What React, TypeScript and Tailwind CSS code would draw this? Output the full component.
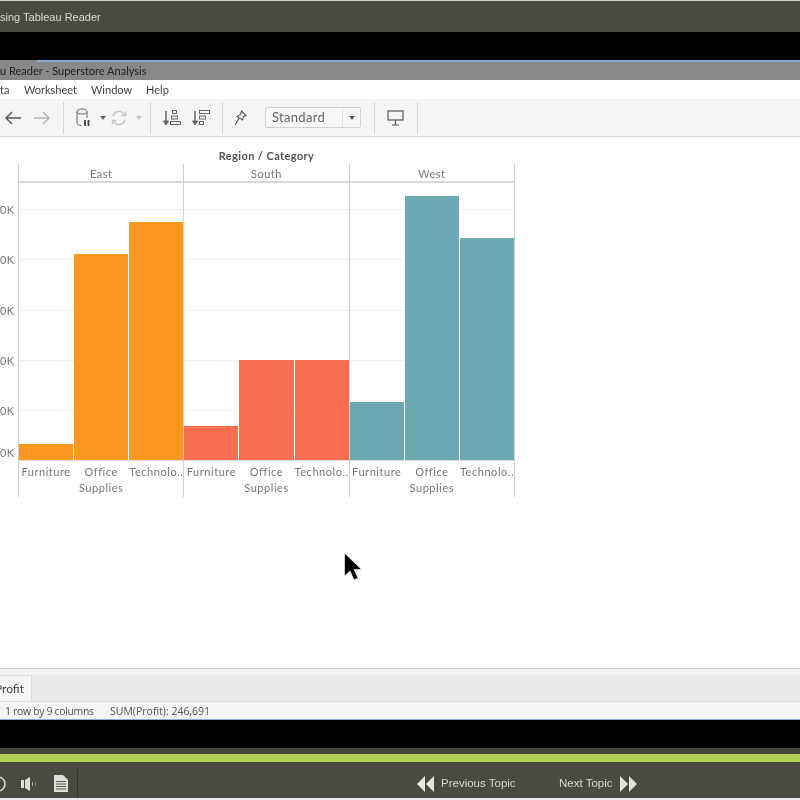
const panes = [
  { name: "East", color: "bg-[#fd9720]", tops: [444, 254, 222] },
  { name: "South", color: "bg-[#f96f52]", tops: [426, 360, 360] },
  { name: "West", color: "bg-[#6ca9b3]", tops: [402, 196, 238] },
];
const gridY = [209, 259, 310, 360, 410];
const axisY = [209, 259, 310, 360, 410, 452];
const font = "font-['Lato','Open_Sans',sans-serif]";

function Sep({ ml }: { ml: string }) {
  return <div className={`h-[32px] w-px bg-[#d8d8d8] shrink-0 ${ml}`} />;
}

function Caret({ ml, color }: { ml: string; color: string }) {
  return (
    <svg width="6" height="4" viewBox="0 0 6 4" className={`shrink-0 ${ml}`}>
      <path d="M0 0h6L3 4z" fill={color} />
    </svg>
  );
}

function Toolbar() {
  return (
    <div className="h-[37px] bg-[#f5f5f5] border-b border-[#d4d4d4] flex items-center shrink-0 box-content">
      <svg width="16" height="14" viewBox="0 0 16 14" className="ml-[5px] shrink-0" fill="none" stroke="#555" strokeWidth="1.5">
        <path d="M16 7H1M7 1 1 7l6 6" />
      </svg>
      <svg width="16" height="14" viewBox="0 0 16 14" className="ml-[13px] shrink-0" fill="none" stroke="#b5b5b5" strokeWidth="1.5">
        <path d="M0 7h15M9 1l6 6-6 6" />
      </svg>
      <Sep ml="ml-[13px]" />
      <svg width="15" height="19" viewBox="0 0 15 19" className="ml-[12px] shrink-0" fill="none" stroke="#666" strokeWidth="1">
        <ellipse cx="6" cy="3.5" rx="5" ry="2.5" />
        <path d="M1 3.5V15c0 1.5 2 2.500 4.500 2.500M11 3.500V10" />
        <path d="M9 12v6M12.500 12v6" strokeWidth="1.800" stroke="#444" />
      </svg>
      <Caret ml="ml-[9px]" color="#666" />
      <svg width="16" height="16" viewBox="0 0 16 16" className="ml-[5px] shrink-0" fill="none" stroke="#c4c4c4" strokeWidth="1.300">
        <path d="M2 6a6.200 6.200 0 0 1 11-2l1 1.500M14 10a6.200 6.200 0 0 1-11 2l-1-1.500" />
        <path d="M14.500 1.500v4h-4M1.500 14.500v-4h4" />
      </svg>
      <Caret ml="ml-[9px]" color="#c4c4c4" />
      <Sep ml="ml-[8px]" />
      <svg width="18" height="16" viewBox="0 0 18 16" className="ml-[12px] shrink-0" fill="none" stroke="#666" strokeWidth="1">
        <path d="M3 1v12" strokeWidth="1.500" />
        <path d="M.5 11 3 15l2.500-4z" fill="#666" />
        <rect x="9.500" y=".5" width="4" height="3" />
        <rect x="8.500" y="6" width="6" height="3" />
        <rect x="7.500" y="11.500" width="10" height="3" />
      </svg>
      <svg width="18" height="16" viewBox="0 0 18 16" className="ml-[11px] shrink-0" fill="none" stroke="#666" strokeWidth="1">
        <path d="M3 1v12" strokeWidth="1.500" />
        <path d="M.5 11 3 15l2.500-4z" fill="#666" />
        <rect x="7.500" y=".5" width="10" height="3" />
        <rect x="7.500" y="6" width="6" height="3" />
        <rect x="7.500" y="11.500" width="4" height="3" />
      </svg>
      <Sep ml="ml-[12px]" />
      <svg width="13" height="16" viewBox="0 0 13 16" className="ml-[11px] shrink-0" fill="none" stroke="#555" strokeWidth="1.100">
        <path d="M7.500 1 12 5.500 9.500 6.500 8.500 10 3 6.500l3.500-2zM5 8.500 1 15" />
      </svg>
      <div className="ml-[18px] w-[96px] h-[21px] border border-[#d2d2d2] rounded-[2px] bg-[#f7f7f7] flex items-center shrink-0">
        <span className={`${font} text-[13px] text-[#666] ml-[6px] tracking-[0.3px] leading-none`}>Standard</span>
        <div className="ml-auto h-full w-[18px] border-l border-[#e2e2e2] flex items-center justify-center">
          <Caret ml="" color="#555" />
        </div>
      </div>
      <Sep ml="ml-[13px]" />
      <svg width="17" height="16" viewBox="0 0 17 16" className="ml-[12px] shrink-0" fill="none" stroke="#555" strokeWidth="1.200">
        <rect x="1" y="1" width="15" height="9" />
        <path d="M8.500 10v5M5 15h7" />
      </svg>
      <Sep ml="ml-[13px]" />
    </div>
  );
}

function Chart() {
  return (
    <div className="h-[531px] bg-white shrink-0 relative overflow-hidden">
      {axisY.map((y) => (
        <span
          key={y}
          style={{ top: y - 137 - 6 }}
          className={`absolute left-0 w-[13px] text-right text-[11px] leading-[14px] tracking-[0.3px] text-[#7a7a7a] ${font}`}
        >
          0K
        </span>
      ))}
      <div className="ml-[18px] w-[497px]">
        <div className={`${font} h-[27px] pt-[12px] text-center text-[11px] leading-[14px] font-bold tracking-[0.4px] text-[#555]`}>
          Region / Category
        </div>
        <div className="flex border-r border-[#cfcfcf] h-[333px]">
          {panes.map((p) => (
            <div key={p.name} className="flex-1 border-l border-[#cfcfcf] flex flex-col min-w-0">
              <div className={`${font} h-[19px] shrink-0 border-b-2 border-[#d9d9d9] text-center text-[11px] leading-[19px] tracking-[0.5px] text-[#7a7a7a]`}>
                {p.name}
              </div>
              <div className="relative h-[277px] shrink-0 flex items-end gap-px">
                {gridY.map((y) => (
                  <div key={y} style={{ top: y - 183 }} className="absolute left-0 right-0 h-px bg-[#f0f0f0]" />
                ))}
                {p.tops.map((t, i) => (
                  <div key={i} style={{ height: 460 - t }} className={`relative flex-1 ${p.color}`} />
                ))}
              </div>
              <div className={`${font} flex gap-px border-t border-[#d9d9d9] text-[11px] leading-[16px] tracking-[0.55px] text-[#777] text-center pt-[3px]`}>
                <div className="flex-1 min-w-0 whitespace-nowrap">Furniture</div>
                <div className="flex-1 min-w-0">Office<br />Supplies</div>
                <div className="flex-1 min-w-0 whitespace-nowrap">Technolo..</div>
              </div>
            </div>
          ))}
        </div>
      </div>
    </div>
  );
}

export default function App() {
  return (
    <div className="w-[800px] h-[800px] overflow-hidden bg-white flex flex-col blur-[0.4px] font-['Liberation_Sans',Arial,sans-serif]">
      <div className="h-px bg-[#cfcfcb] shrink-0" />
      <div className="h-[31px] bg-[#4a4a42] shrink-0 flex items-center text-[11px] text-[#dcdcd8] pt-[1px]">sing Tableau Reader</div>
      <div className="h-[28px] bg-black shrink-0" />
      <div className="h-[2px] pl-[37px] bg-[#888888] shrink-0">
        <div className="h-full bg-[#8fa9d4]" />
      </div>
      <div className={`h-[18px] bg-[#888888] shrink-0 flex items-center text-[11px] text-[#222] ${font}`}>u Reader - Superstore Analysis</div>
      <div className={`h-[19px] bg-white shrink-0 flex items-center text-[11px] text-[#444] pt-[1px] ${font}`}>
        <span className="w-[24px]">ta</span>
        <span className="w-[67px]">Worksheet</span>
        <span className="w-[55px]">Window</span>
        <span>Help</span>
      </div>
      <Toolbar />
      <Chart />
      <div className="h-px bg-[#cdcdcd] shrink-0" />
      <div className="h-[6px] bg-[#f4f4f4] shrink-0" />
      <div className="h-[27px] bg-[#ebebeb] border-b border-[#e0e0e0] shrink-0 flex">
        <div className={`w-[32px] bg-[#f5f5f5] border-r border-[#dcdcdc] border-t flex items-center justify-end pr-[7px] text-[12px] text-[#444] ${font}`}>
          Profit
        </div>
      </div>
      <div className="h-[18px] bg-[#f5f5f5] border-b border-[#8fa9d4] shrink-0 flex items-center text-[10.500px] text-[#555] pt-[3px] font-['Open_Sans',sans-serif]">
        <span className="ml-[5px] w-[105px] tracking-[-0.35px]">1 row by 9 columns</span>
        <span>SUM(Profit): 246,691</span>
      </div>
      <div className="h-[28px] bg-black shrink-0" />
      <div className="h-[6px] bg-[#46463f] shrink-0" />
      <div className="h-[8px] bg-[#b3d054] shrink-0" />
      <div className="h-[36px] bg-[#4a4a42] shrink-0 flex items-center pt-[7px] text-[11.500px] text-[#d8d8d2]">
        <svg width="6" height="16" viewBox="0 0 6 16" className="shrink-0" fill="none" stroke="#e0e0da" strokeWidth="1.500">
          <circle cx="-2" cy="8" r="7" />
          <circle cx="-2" cy="8" r="2" fill="#e0e0da" stroke="none" />
        </svg>
        <svg width="17" height="14" viewBox="0 0 17 14" className="ml-[15px] shrink-0" fill="#e0e0da">
          <path d="M0 3h3v8H0zM4 3l5-3v14l-5-3z" />
          <path d="M11 4.500c1 1.500 1 3.500 0 5zM14 5c.7 1 .7 3 0 4z" />
        </svg>
        <svg width="14" height="17" viewBox="0 0 14 17" className="ml-[16px] shrink-0">
          <path d="M0 0h9l5 5v12H0z" fill="#e0e0da" />
          <path d="M2 6.500h10M2 9h10M2 11.500h10M2 14h10" stroke="#4a4a42" strokeWidth=".9" />
        </svg>
        <div className="ml-[9px] w-px h-[29px] bg-[#35352f] shrink-0" />
        <svg width="18" height="16" viewBox="0 0 18 16" className="ml-[339px] shrink-0" fill="#e4e4de">
          <path d="M8 0v16L0 8zM17 0v16L9 8z" />
        </svg>
        <span className="ml-[6px] w-[118px]">Previous Topic</span>
        <span className="w-[61px]">Next Topic</span>
        <svg width="17" height="16" viewBox="0 0 17 16" className="shrink-0" fill="#e4e4de">
          <path d="M0 0v16l8-8zM9 0v16l8-8z" />
        </svg>
      </div>
      <div className="flex-1 bg-[#e8e8e8]" />
      <svg width="20" height="30" viewBox="0 0 20 30" className="absolute left-[343px] top-[552px]">
        <path d="M1.500 1v23l5.500-5 4 9 4-2-4-8.500h7.500z" fill="#000" stroke="#fff" strokeWidth=".6" />
      </svg>
    </div>
  );
}
